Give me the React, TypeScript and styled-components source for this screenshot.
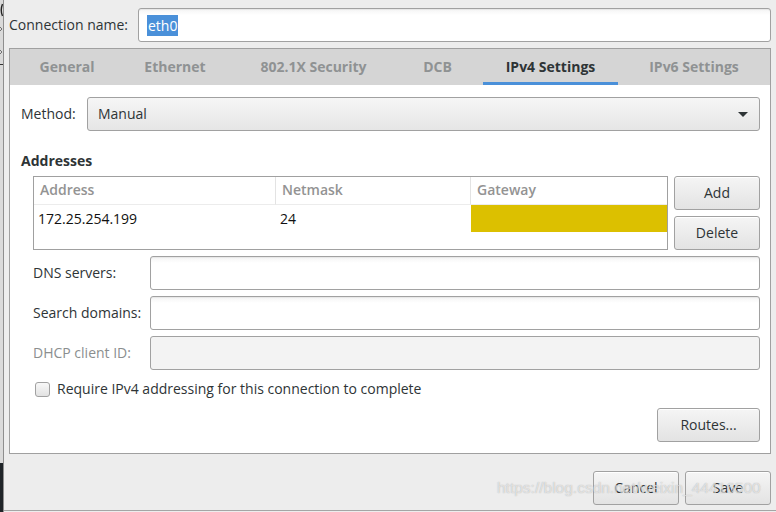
import React from 'react';
import styled, { createGlobalStyle } from 'styled-components';

const font = {
  ui: '"Open Sans", "DejaVu Sans", sans-serif',
};

const color = {
  text: '#2e3436',
  dim: '#8b8e8f',
  border: '#a1a1a1',
  bg: '#ededed',
  blue: '#4a90d9',
};

const GlobalStyle = createGlobalStyle`
  html, body {
    margin: 0;
    padding: 0;
    background: ${color.bg};
  }
  body {
    font: 14px/18px ${font.ui};
    color: ${color.text};
  }
  * { box-sizing: border-box; }
`;

const Screen = styled.div`
  position: relative;
  width: 776px;
  height: 512px;
  display: flex;
  overflow: hidden;
  background: ${color.bg};
`;

const Strip = styled.div`
  width: 4px;
  flex: none;
  border-right: 1px solid #8e8e8e;
  background: linear-gradient(to bottom, #dadada 0, #dadada 463px, #1f2428 463px);
`;

const Dialog = styled.div`
  flex: 1;
  height: 511px;
  display: flex;
  flex-direction: column;
  padding: 8px 5px 0 5px;
  border-bottom: 1px solid #a5a5a5;
`;

const HeaderRow = styled.div`
  display: flex;
  align-items: center;
  height: 34px;
`;

const Label = styled.span<{ $w?: number; $dim?: boolean }>`
  flex: none;
  width: ${(p) => (p.$w ? `${p.$w}px` : 'auto')};
  color: ${(p) => (p.$dim ? color.dim : color.text)};
  white-space: nowrap;
`;

const Entry = styled.div<{ $disabled?: boolean }>`
  flex: 1;
  height: 34px;
  display: flex;
  align-items: center;
  padding-left: 8px;
  border: 1px solid ${color.border};
  border-radius: 3px;
  background: ${(p) =>
    p.$disabled ? '#f3f3f3' : 'linear-gradient(to bottom, #f4f4f4 0, #ffffff 6px, #ffffff 100%)'};
  box-shadow: ${(p) => (p.$disabled ? 'none' : 'inset 0 1px 1px rgba(0,0,0,0.06)')};
`;

const Selected = styled.span`
  background: ${color.blue};
  color: #fff;
  padding: 1px 1px;
  line-height: 19px;
`;

const Notebook = styled.div`
  margin-top: 6px;
  display: flex;
  flex-direction: column;
  height: 406px;
  border: 1px solid #a0a0a0;
`;

const TabBar = styled.div`
  height: 36px;
  display: flex;
  gap: 8px;
  padding-left: 9px;
  background: #d5d5d5;
`;

const Tab = styled.div<{ $w: number; $active?: boolean }>`
  width: ${(p) => p.$w}px;
  display: flex;
  align-items: center;
  justify-content: center;
  padding-bottom: 1px;
  font-weight: 700;
  color: ${(p) => (p.$active ? color.text : '#8f9293')};
  box-shadow: ${(p) => (p.$active ? `inset 0 -3px 0 ${color.blue}` : 'none')};
`;

const Page = styled.div`
  flex: 1;
  display: flex;
  flex-direction: column;
  background: #fff;
  padding: 12px 10px 11px 11px;
`;

const Row = styled.div<{ $indent?: number; $top?: number }>`
  display: flex;
  align-items: center;
  margin-left: ${(p) => p.$indent ?? 0}px;
  margin-top: ${(p) => p.$top ?? 0}px;
`;

const Combo = styled.div`
  flex: 1;
  height: 34px;
  display: flex;
  align-items: center;
  justify-content: space-between;
  padding: 0 11px 0 10px;
  border: 1px solid ${color.border};
  border-radius: 3px;
  background: linear-gradient(to bottom, #f6f6f6, #e6e6e6);
`;

const Arrow = styled.span`
  width: 0;
  height: 0;
  border-left: 5px solid transparent;
  border-right: 5px solid transparent;
  border-top: 5px solid #2e3436;
`;

const SectionTitle = styled.div`
  margin-top: 21px;
  height: 18px;
  font-weight: 700;
`;

const AddressBlock = styled.div`
  display: flex;
  gap: 6px;
  margin: 6px 0 0 12px;
`;

const Table = styled.div`
  flex: 1;
  height: 74px;
  border: 1px solid #a0a0a0;
  display: grid;
  grid-template-columns: 242px 195px 1fr;
  grid-template-rows: 28px 27px 1fr;
`;

const HeadCell = styled.div<{ $last?: boolean }>`
  display: flex;
  align-items: center;
  padding-left: 6px;
  padding-bottom: 1px;
  color: #939393;
  font-weight: 600;
  border-bottom: 1px solid #ececec;
  border-right: ${(p) => (p.$last ? 'none' : '1px solid #e3e3e3')};
`;

const Cell = styled.div<{ $fill?: string }>`
  display: flex;
  align-items: center;
  padding-left: 4px;
  color: #111;
  background: ${(p) => p.$fill ?? 'transparent'};
`;

const ButtonColumn = styled.div`
  width: 86px;
  display: flex;
  flex-direction: column;
  gap: 6px;
`;

const Button = styled.div<{ $w?: number }>`
  width: ${(p) => (p.$w ? `${p.$w}px` : '100%')};
  height: 34px;
  display: flex;
  align-items: center;
  justify-content: center;
  border: 1px solid ${color.border};
  border-radius: 3px;
  background: linear-gradient(to bottom, #f5f5f5, #e3e3e3);
  box-shadow: inset 0 1px 0 #fff;
  color: ${color.text};
`;

const Fields = styled.div`
  display: flex;
  flex-direction: column;
  gap: 6px;
  margin: 6px 0 0 12px;
`;

const Check = styled.span`
  width: 15px;
  height: 15px;
  margin: 0 7px 0 2px;
  border: 1px solid ${color.border};
  border-radius: 3px;
  background: linear-gradient(to bottom, #f8f8f8, #e2e2e2);
`;

const Actions = styled.div<{ $top: number }>`
  display: flex;
  justify-content: flex-end;
  gap: 6px;
  margin-top: ${(p) => p.$top}px;
`;

const Watermark = styled.div`
  position: absolute;
  left: 497px;
  top: 479px;
  font: 15.5px/18px "Liberation Sans", Arial, sans-serif;
  color: rgba(255, 255, 255, 0.6);
  text-shadow: 0 0 1px rgba(110, 110, 110, 0.55);
  white-space: nowrap;
  pointer-events: none;
`;

const tabs = [
  { name: 'General', w: 96 },
  { name: 'Ethernet', w: 104 },
  { name: '802.1X Security', w: 157 },
  { name: 'DCB', w: 75 },
  { name: 'IPv4 Settings', w: 135, active: true },
  { name: 'IPv6 Settings', w: 136 },
];

const fields = [
  { label: 'DNS servers:' },
  { label: 'Search domains:' },
  { label: 'DHCP client ID:', disabled: true },
];

export default function App() {
  return (
    <Screen>
      <GlobalStyle />
      <Strip>
        <svg width="3" height="80" viewBox="0 0 3 80">
          <path d="M2.5 4 Q0 10 2.5 16" stroke="#222" strokeWidth="1.4" fill="none" />
          <path d="M0 27 L2 29 L0 31" stroke="#555" strokeWidth="0.8" fill="none" />
          <path d="M0 50 L2 52 L0 54" stroke="#555" strokeWidth="0.8" fill="none" />
          <rect x="0" y="64" width="3" height="1" fill="#333" />
        </svg>
      </Strip>
      <Dialog>
        <HeaderRow>
          <Label $w={129}>Connection name:</Label>
          <Entry>
            <Selected>eth0</Selected>
          </Entry>
        </HeaderRow>

        <Notebook>
          <TabBar>
            {tabs.map((t) => (
              <Tab key={t.name} $w={t.w} $active={t.active}>
                {t.name}
              </Tab>
            ))}
          </TabBar>
          <Page>
            <Row>
              <Label $w={66}>Method:</Label>
              <Combo>
                <span>Manual</span>
                <Arrow />
              </Combo>
            </Row>

            <SectionTitle>Addresses</SectionTitle>
            <AddressBlock>
              <Table>
                <HeadCell>Address</HeadCell>
                <HeadCell>Netmask</HeadCell>
                <HeadCell $last>Gateway</HeadCell>
                <Cell>172.25.254.199</Cell>
                <Cell>24</Cell>
                <Cell $fill="#dcc000" />
              </Table>
              <ButtonColumn>
                <Button>Add</Button>
                <Button>Delete</Button>
              </ButtonColumn>
            </AddressBlock>

            <Fields>
              {fields.map((f) => (
                <Row key={f.label}>
                  <Label $w={117} $dim={f.disabled}>
                    {f.label}
                  </Label>
                  <Entry $disabled={f.disabled} />
                </Row>
              ))}
            </Fields>

            <Row $indent={12} $top={10}>
              <Check />
              <span>Require IPv4 addressing for this connection to complete</span>
            </Row>

            <Actions $top={10}>
              <Button $w={103}>Routes...</Button>
            </Actions>
          </Page>
        </Notebook>

        <Actions $top={17}>
          <Button $w={86}>Cancel</Button>
          <Button $w={86}>Save</Button>
        </Actions>
      </Dialog>
      <Watermark>https://blog.csdn.net/weixin_44416500</Watermark>
    </Screen>
  );
}
